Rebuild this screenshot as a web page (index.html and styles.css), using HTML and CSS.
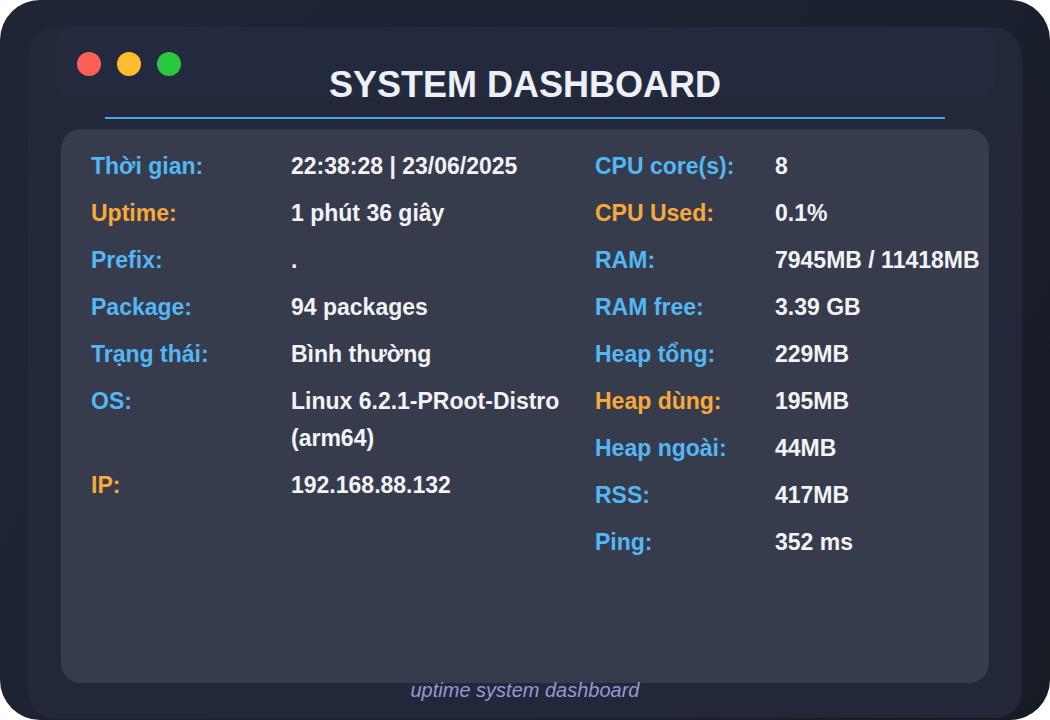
FILE: index.html
```html
<!DOCTYPE html>
<html lang="vi">
<head>
<meta charset="utf-8">
<title>System Dashboard</title>
<link rel="stylesheet" href="styles.css">
</head>
<body>
<div class="frame">
  <div class="panel">
    <div class="dots">
      <span class="dot red"></span>
      <span class="dot yellow"></span>
      <span class="dot green"></span>
    </div>
    <h1 class="title">SYSTEM DASHBOARD</h1>
    <div class="card">
      <div class="col col-left">
        <div class="label blue">Thời gian:</div><div class="value">22:38:28 | 23/06/2025</div>
        <div class="label orange">Uptime:</div><div class="value">1 phút 36 giây</div>
        <div class="label blue">Prefix:</div><div class="value">.</div>
        <div class="label blue">Package:</div><div class="value">94 packages</div>
        <div class="label blue">Trạng thái:</div><div class="value">Bình thường</div>
        <div class="label blue">OS:</div><div class="value">Linux 6.2.1-PRoot-Distro (arm64)</div>
        <div class="label orange">IP:</div><div class="value">192.168.88.132</div>
      </div>
      <div class="col col-right">
        <div class="label blue">CPU core(s):</div><div class="value">8</div>
        <div class="label orange">CPU Used:</div><div class="value">0.1%</div>
        <div class="label blue">RAM:</div><div class="value">7945MB / 11418MB</div>
        <div class="label blue">RAM free:</div><div class="value">3.39 GB</div>
        <div class="label blue">Heap tổng:</div><div class="value">229MB</div>
        <div class="label orange">Heap dùng:</div><div class="value">195MB</div>
        <div class="label blue">Heap ngoài:</div><div class="value">44MB</div>
        <div class="label blue">RSS:</div><div class="value">417MB</div>
        <div class="label blue">Ping:</div><div class="value">352 ms</div>
      </div>
    </div>
    <div class="footer">uptime system dashboard</div>
  </div>
</div>
</body>
</html>
```

FILE: styles.css
```css
html, body {
  margin: 0;
  padding: 0;
  background: #ffffff;
}

body {
  font-family: "Liberation Sans", Arial, sans-serif;
}

.frame {
  width: 1050px;
  height: 720px;
  box-sizing: border-box;
  padding: 27px 28px 2px 28px;
  border-radius: 40px;
  background: linear-gradient(120deg, #1f2535 0%, #1c2130 60%, #171b24 100%);
  overflow: hidden;
}

.panel {
  position: relative;
  height: 100%;
  box-sizing: border-box;
  display: flex;
  flex-direction: column;
  padding: 36px 0 18px 0;
  background: #222739;
  border-radius: 30px 30px 26px 26px;
}

.panel::before {
  content: "";
  position: absolute;
  top: 0;
  left: 27px;
  right: 27px;
  height: 70px;
  background: #242a3e;
  border-radius: 16px;
}

.dots {
  position: absolute;
  top: 25px;
  left: 49px;
  display: flex;
  gap: 16px;
}

.dot {
  width: 24px;
  height: 24px;
  border-radius: 50%;
}

.red { background: #ff5f57; }
.yellow { background: #febc2e; }
.green { background: #28c840; }

.title {
  position: relative;
  margin: 0 77px;
  padding-bottom: 11px;
  border-bottom: 2px solid #45acf0;
  font-size: 36px;
  line-height: 43px;
  font-weight: 700;
  text-align: center;
  color: #eef0f7;
}

.card {
  flex: 1;
  margin: 10px 33px 0 33px;
  padding: 19px 30px 0 30px;
  background: #373c4d;
  border-radius: 20px;
  display: flex;
}

.col {
  display: grid;
  row-gap: 10px;
  align-content: start;
  font-size: 23px;
  line-height: 37px;
  font-weight: 700;
}

.col-left {
  grid-template-columns: 200px 284px;
  margin-right: 20px;
}

.col-right {
  grid-template-columns: 180px max-content;
}

.blue { color: #52b7f4; }
.orange { color: #f9a93a; }

.value {
  color: #f2f3f6;
}

.footer {
  margin-top: -3px;
  font-size: 20px;
  line-height: 20px;
  font-style: italic;
  text-align: center;
  color: #8e9cd4;
}
```
